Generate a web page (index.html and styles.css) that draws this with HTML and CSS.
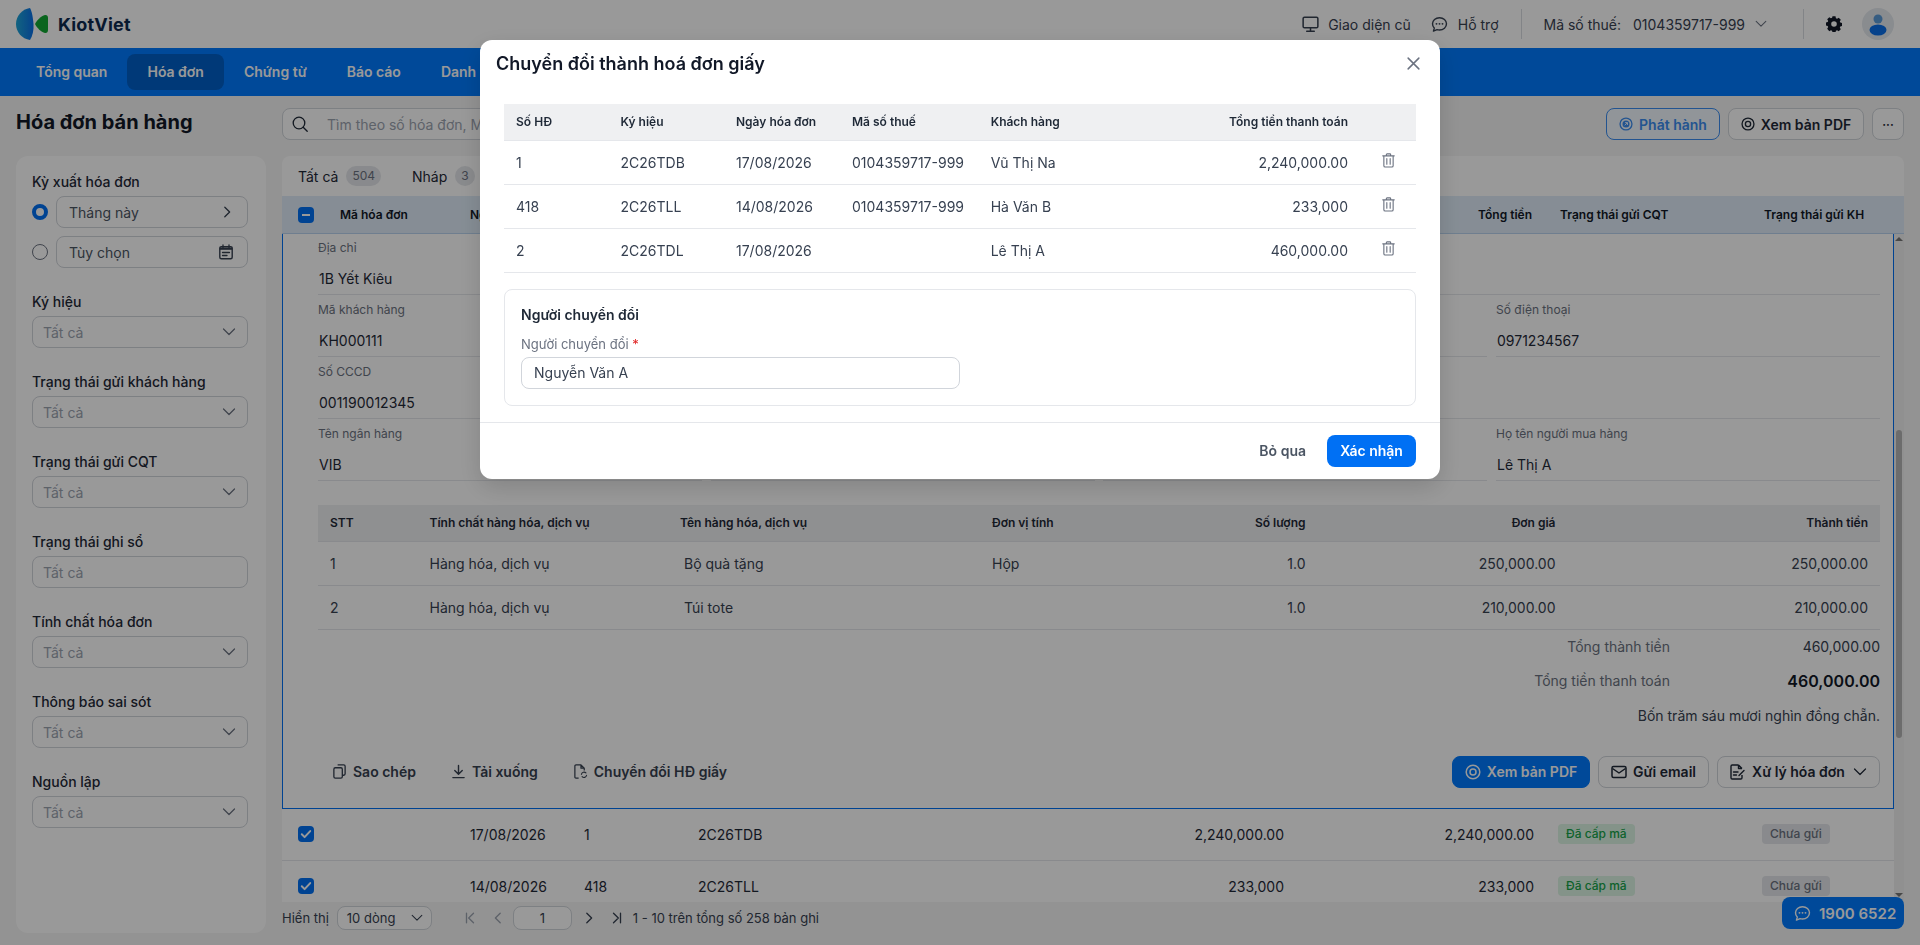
FILE: index.html
```html
<!DOCTYPE html>
<html lang="vi">
<head>
    <meta charset="UTF-8">
    <meta name="viewport" content="width=device-width, initial-scale=1.0">
    <title>Hóa đơn bán hàng</title>
    <link rel="stylesheet" href="styles.css">
</head>
<body>
    <svg class="icon-defs" xmlns="http://www.w3.org/2000/svg">
        <symbol id="i-down" viewBox="0 0 16 16"><path d="M2.500 5l5.500 5.500L13.500 5" fill="none" stroke="currentColor" stroke-width="1.200" stroke-linecap="round" stroke-linejoin="round"/></symbol>
        <symbol id="i-right" viewBox="0 0 16 16"><path d="M5.500 2.500l5.500 5.500-5.500 5.500" fill="none" stroke="currentColor" stroke-width="1.500" stroke-linecap="round" stroke-linejoin="round"/></symbol>
        <symbol id="i-left" viewBox="0 0 16 16"><path d="M10.500 2.500L5 8l5.500 5.500" fill="none" stroke="currentColor" stroke-width="1.500" stroke-linecap="round" stroke-linejoin="round"/></symbol>
        <symbol id="i-first" viewBox="0 0 16 16"><path d="M12 2.500L6.500 8l5.500 5.500M4 2.500v11" fill="none" stroke="currentColor" stroke-width="1.500" stroke-linecap="round" stroke-linejoin="round"/></symbol>
        <symbol id="i-last" viewBox="0 0 16 16"><path d="M4 2.500L9.500 8 4 13.500M12 2.500v11" fill="none" stroke="currentColor" stroke-width="1.500" stroke-linecap="round" stroke-linejoin="round"/></symbol>
        <symbol id="i-monitor" viewBox="0 0 18 18"><rect x="1.200" y="1.200" width="15.600" height="11.300" rx="1.400" fill="none" stroke="currentColor" stroke-width="1.600"/><path d="M9 12.500v3.400M5 16.200h8" fill="none" stroke="currentColor" stroke-width="1.600" stroke-linecap="round"/></symbol>
        <symbol id="i-chat" viewBox="0 0 18 18"><path d="M9 1.800c4.200 0 7.400 2.900 7.400 6.500S13.200 14.800 9 14.800c-.9 0-1.800-.1-2.600-.4L2.600 16l.9-3.200C2.200 11.700 1.600 10.100 1.600 8.300 1.600 4.700 4.800 1.800 9 1.800z" fill="none" stroke="currentColor" stroke-width="1.500" stroke-linejoin="round"/><circle cx="5.800" cy="8.300" r="1" fill="currentColor"/><circle cx="9" cy="8.300" r="1" fill="currentColor"/><circle cx="12.200" cy="8.300" r="1" fill="currentColor"/></symbol>
        <symbol id="i-gear" viewBox="0 0 16 16"><path fill-rule="evenodd" d="M6.500.8h3l.4 1.900 1.200.5 1.600-1 2.100 2.100-1 1.600.5 1.200 1.900.4v3l-1.900.4-.5 1.200 1 1.600-2.100 2.100-1.600-1-1.200.5-.4 1.900h-3l-.4-1.900-1.200-.5-1.600 1L1.200 13.200l1-1.600-.5-1.200L-.2 10V7l1.900-.4.5-1.200-1-1.600L3.300 1.700l1.600 1 1.200-.5zM8 5.700a2.800 2.800 0 100 5.600 2.800 2.800 0 000-5.600z" transform="translate(0 -.5)" fill="currentColor"/></symbol>
        <symbol id="i-search" viewBox="0 0 16 16"><circle cx="7" cy="7" r="5.800" fill="none" stroke="currentColor" stroke-width="1.300"/><path d="M11.200 11.200l4 4" stroke="currentColor" stroke-width="1.300" stroke-linecap="round"/></symbol>
        <symbol id="i-target" viewBox="0 0 16 16"><circle cx="8" cy="8" r="6.800" fill="none" stroke="currentColor" stroke-width="1.500"/><circle cx="8" cy="8" r="3" fill="none" stroke="currentColor" stroke-width="1.500"/></symbol>
        <symbol id="i-issue" viewBox="0 0 16 16"><circle cx="8" cy="8" r="6.800" fill="none" stroke="currentColor" stroke-width="1.500"/><circle cx="8" cy="8" r="4" fill="currentColor"/><path d="M6.600 9.500l3-3M7 6.400h2.700v2.700" fill="none" stroke="#eef5ff" stroke-width="1.100"/></symbol>
        <symbol id="i-calendar" viewBox="0 0 16 16"><rect x="1.800" y="2.600" width="12.400" height="12.200" rx="1.500" fill="none" stroke="currentColor" stroke-width="1.400"/><path d="M1.800 3.400h12.400v2.400H1.800z" fill="currentColor"/><path d="M5 1v2.500M11 1v2.500M4.500 8.500h7M4.500 11.500h4.500" stroke="currentColor" stroke-width="1.300" stroke-linecap="round"/></symbol>
        <symbol id="i-trash" viewBox="0 0 14 16"><path d="M.8 3h12.400M4.700 3V1.600c0-.4.300-.7.700-.7h3.200c.4 0 .7.300.7.700V3M2 3v10.600c0 .8.600 1.400 1.400 1.400h7.200c.8 0 1.400-.6 1.400-1.400V3M5.200 6v6M8.800 6v6" fill="none" stroke="currentColor" stroke-width="1.200" stroke-linecap="round" stroke-linejoin="round"/></symbol>
        <symbol id="i-close" viewBox="0 0 14 14"><path d="M2 2l10 10M12 2L2 12" fill="none" stroke="currentColor" stroke-width="1.400" stroke-linecap="round"/></symbol>
        <symbol id="i-mail" viewBox="0 0 16 16"><rect x="1" y="2.500" width="14" height="11" rx="1.500" fill="none" stroke="currentColor" stroke-width="1.500"/><path d="M1.500 4.500L8 9l6.500-4.500" fill="none" stroke="currentColor" stroke-width="1.500" stroke-linejoin="round"/></symbol>
        <symbol id="i-docedit" viewBox="0 0 16 16"><path d="M9.500 1H3.200C2.500 1 2 1.500 2 2.200v11.600c0 .7.500 1.200 1.200 1.200h8.600c.7 0 1.200-.5 1.200-1.200V11M9.500 1L13 4.500M9.500 1v3.500H13" fill="none" stroke="currentColor" stroke-width="1.400" stroke-linejoin="round"/><path d="M4.500 8h4.500M4.500 11h3M10 11.500l5-5" fill="none" stroke="currentColor" stroke-width="1.400" stroke-linecap="round"/></symbol>
        <symbol id="i-copy" viewBox="0 0 16 16"><path d="M6 1h6.500C13.300 1 14 1.700 14 2.500v8c0 .8-.7 1.500-1.500 1.500H11" fill="none" stroke="currentColor" stroke-width="1.400"/><rect x="2" y="4" width="9" height="11" rx="1.500" fill="none" stroke="currentColor" stroke-width="1.400"/></symbol>
        <symbol id="i-download" viewBox="0 0 16 16"><path d="M8 1.500v9M4 7l4 4 4-4M2 14.500h12" fill="none" stroke="currentColor" stroke-width="1.500" stroke-linecap="round" stroke-linejoin="round"/></symbol>
        <symbol id="i-fileswap" viewBox="0 0 16 16"><path d="M6 15H3.200C2.500 15 2 14.500 2 13.800V2.200C2 1.500 2.500 1 3.200 1h5.300L12 4.500V7M8.500 1v3.500H12" fill="none" stroke="currentColor" stroke-width="1.300" stroke-linejoin="round"/><path d="M9 11a2.800 2.800 0 014.800-1.500M14.500 12a2.800 2.800 0 01-4.800 1.500" fill="none" stroke="currentColor" stroke-width="1.200" stroke-linecap="round"/></symbol>
        <symbol id="i-check" viewBox="0 0 16 16"><path d="M3.800 8.300l2.800 2.800 5.600-6" fill="none" stroke="#fff" stroke-width="2" stroke-linecap="round" stroke-linejoin="round"/></symbol>
    </svg>

    <div class="app">
        <div class="header">
            <div class="logo">
                <svg class="logo-mark" viewBox="0 0 33 32" xmlns="http://www.w3.org/2000/svg">
                    <defs>
                        <linearGradient id="logo-blue" x1="0" y1="0" x2="1" y2="0">
                            <stop offset="0" stop-color="#1fa6d6"/>
                            <stop offset="1" stop-color="#0a6fe8"/>
                        </linearGradient>
                    </defs>
                    <path d="M14 0C6 1 0 8 0 16s6 15 14 16c2.500-4 4-10 3.500-16S16 3.500 14 0z" fill="url(#logo-blue)"/>
                    <path d="M19 16c2-4 6-8 10-9 2-.2 3 1 3 3v12c0 2-1 3.200-3 3-4-1-8-5-10-9z" fill="#12a833"/>
                </svg>
                <span class="logo-text">KiotViet</span>
            </div>
            <div class="header-right">
                <svg class="ic-17"><use href="#i-monitor"/></svg>
                <span class="h-giao">Giao diện cũ</span>
                <svg class="ic-17 h-chat"><use href="#i-chat"/></svg>
                <span class="h-support">Hỗ trợ</span>
                <span class="h-divider"></span>
                <span>Mã số thuế:</span>
                <span class="h-tax">0104359717-999</span>
                <svg class="ic-14 h-caret"><use href="#i-down"/></svg>
                <span class="h-divider h-divider-2"></span>
                <svg class="ic-16 h-gear"><use href="#i-gear"/></svg>
                <span class="avatar">
                    <svg viewBox="0 0 32 32"><circle cx="16" cy="11" r="4.500" fill="#5b9bd9"/><ellipse cx="16" cy="22" rx="8.500" ry="5.500" fill="#0a6fe8"/></svg>
                </span>
            </div>
        </div>

        <div class="nav">
            <a class="nav-item" href="#">Tổng quan</a>
            <a class="nav-item active" href="#">Hóa đơn</a>
            <a class="nav-item" href="#">Chứng từ</a>
            <a class="nav-item" href="#">Báo cáo</a>
            <a class="nav-item" href="#">Danh mục</a>
        </div>

        <div class="page">
            <h1 class="page-title">Hóa đơn bán hàng</h1>
            <div class="toolbar">
                <div class="search">
                    <svg class="ic-16"><use href="#i-search"/></svg>
                    <span>Tìm theo số hóa đơn, Mã</span>
                </div>
                <button class="btn btn-issue"><svg class="ic-14"><use href="#i-issue"/></svg>Phát hành</button>
                <button class="btn btn-pdf"><svg class="ic-14"><use href="#i-target"/></svg>Xem bản PDF</button>
                <button class="btn btn-more">···</button>
            </div>

            <div class="sidebar">
                <div class="filter">
                    <div class="filter-label">Kỳ xuất hóa đơn</div>
                    <div class="radio-row">
                        <span class="radio checked"></span>
                        <div class="select select-dark"><span>Tháng này</span><svg class="ic-14"><use href="#i-right"/></svg></div>
                    </div>
                    <div class="radio-row">
                        <span class="radio"></span>
                        <div class="select select-dark"><span>Tùy chọn</span><svg class="ic-16"><use href="#i-calendar"/></svg></div>
                    </div>
                </div>
                <div class="filter">
                    <div class="filter-label">Ký hiệu</div>
                    <div class="select"><span>Tất cả</span><svg class="ic-16"><use href="#i-down"/></svg></div>
                </div>
                <div class="filter">
                    <div class="filter-label">Trạng thái gửi khách hàng</div>
                    <div class="select"><span>Tất cả</span><svg class="ic-16"><use href="#i-down"/></svg></div>
                </div>
                <div class="filter">
                    <div class="filter-label">Trạng thái gửi CQT</div>
                    <div class="select"><span>Tất cả</span><svg class="ic-16"><use href="#i-down"/></svg></div>
                </div>
                <div class="filter">
                    <div class="filter-label">Trạng thái ghi sổ</div>
                    <div class="select"><span>Tất cả</span></div>
                </div>
                <div class="filter">
                    <div class="filter-label">Tính chất hóa đơn</div>
                    <div class="select"><span>Tất cả</span><svg class="ic-16"><use href="#i-down"/></svg></div>
                </div>
                <div class="filter">
                    <div class="filter-label">Thông báo sai sót</div>
                    <div class="select"><span>Tất cả</span><svg class="ic-16"><use href="#i-down"/></svg></div>
                </div>
                <div class="filter">
                    <div class="filter-label">Nguồn lập</div>
                    <div class="select"><span>Tất cả</span><svg class="ic-16"><use href="#i-down"/></svg></div>
                </div>
            </div>

            <div class="main">
                <div class="panel">
                    <div class="tabs">
                        <div class="tab">Tất cả <span class="count">504</span></div>
                        <div class="tab">Nháp <span class="count">3</span></div>
                    </div>
                    <div class="list-head list-grid">
                        <div><span class="checkbox"><i class="minus"></i></span></div>
                        <div>Mã hóa đơn</div>
                        <div>Ngày</div>
                        <div></div>
                        <div></div>
                        <div></div>
                        <div class="right head-total">Tổng tiền</div>
                        <div class="status head-status">Trạng thái gửi CQT</div>
                        <div class="head-status-kh">Trạng thái gửi KH</div>
                    </div>
                    <div class="list-wrap">
                        <div class="list">
                            <div class="detail">
                                <div class="fields">
                                    <div class="field span-4"><label>Địa chỉ</label><div class="value">1B Yết Kiêu</div></div>
                                    <div class="field"><label>Mã khách hàng</label><div class="value">KH000111</div></div>
                                    <div class="field"></div>
                                    <div class="field"></div>
                                    <div class="field"><label>Số điện thoại</label><div class="value">0971234567</div></div>
                                    <div class="field"><label>Số CCCD</label><div class="value">001190012345</div></div>
                                    <div class="field span-3"></div>
                                    <div class="field"><label>Tên ngân hàng</label><div class="value">VIB</div></div>
                                    <div class="field"></div>
                                    <div class="field"></div>
                                    <div class="field"><label>Họ tên người mua hàng</label><div class="value">Lê Thị A</div></div>
                                </div>

                                <table class="data-table items">
                                    <colgroup>
                                        <col class="c-stt"><col class="c-kind"><col class="c-name"><col class="c-unit"><col class="c-qty"><col class="c-price"><col>
                                    </colgroup>
                                    <thead>
                                        <tr>
                                            <th>STT</th>
                                            <th>Tính chất hàng hóa, dịch vụ</th>
                                            <th>Tên hàng hóa, dịch vụ</th>
                                            <th>Đơn vị tính</th>
                                            <th class="right">Số lượng</th>
                                            <th class="right">Đơn giá</th>
                                            <th class="right">Thành tiền</th>
                                        </tr>
                                    </thead>
                                    <tbody>
                                        <tr>
                                            <td>1</td>
                                            <td>Hàng hóa, dịch vụ</td>
                                            <td class="indent">Bộ quà tặng</td>
                                            <td>Hộp</td>
                                            <td class="right">1.0</td>
                                            <td class="right">250,000.00</td>
                                            <td class="right">250,000.00</td>
                                        </tr>
                                        <tr>
                                            <td>2</td>
                                            <td>Hàng hóa, dịch vụ</td>
                                            <td class="indent">Túi tote</td>
                                            <td></td>
                                            <td class="right">1.0</td>
                                            <td class="right">210,000.00</td>
                                            <td class="right">210,000.00</td>
                                        </tr>
                                    </tbody>
                                </table>

                                <div class="totals">
                                    <div class="total-row"><span class="total-label">Tổng thành tiền</span><span class="total-value">460,000.00</span></div>
                                    <div class="total-row total-row-big"><span class="total-label">Tổng tiền thanh toán</span><span class="total-value">460,000.00</span></div>
                                    <div class="total-words">Bốn trăm sáu mươi nghìn đồng chẵn.</div>
                                </div>

                                <div class="actions">
                                    <div class="actions-left">
                                        <a class="link-action" href="#"><svg class="ic-15"><use href="#i-copy"/></svg>Sao chép</a>
                                        <a class="link-action" href="#"><svg class="ic-15"><use href="#i-download"/></svg>Tải xuống</a>
                                        <a class="link-action" href="#"><svg class="ic-15"><use href="#i-fileswap"/></svg>Chuyển đổi HĐ giấy</a>
                                    </div>
                                    <div class="actions-right">
                                        <button class="btn btn-primary btn-view"><svg class="ic-16"><use href="#i-target"/></svg>Xem bản PDF</button>
                                        <button class="btn btn-mail"><svg class="ic-16"><use href="#i-mail"/></svg>Gửi email</button>
                                        <button class="btn btn-process"><svg class="ic-16"><use href="#i-docedit"/></svg>Xử lý hóa đơn<svg class="ic-16"><use href="#i-down"/></svg></button>
                                    </div>
                                </div>
                            </div>

                            <div class="list-row list-grid">
                                <div><span class="checkbox"><svg><use href="#i-check"/></svg></span></div>
                                <div></div>
                                <div>17/08/2026</div>
                                <div>1</div>
                                <div>2C26TDB</div>
                                <div class="right">2,240,000.00</div>
                                <div class="right">2,240,000.00</div>
                                <div class="status"><span class="badge badge-green">Đã cấp mã</span></div>
                                <div><span class="badge badge-gray">Chưa gửi</span></div>
                            </div>
                            <div class="list-row list-grid">
                                <div><span class="checkbox"><svg><use href="#i-check"/></svg></span></div>
                                <div></div>
                                <div>14/08/2026</div>
                                <div>418</div>
                                <div>2C26TLL</div>
                                <div class="right">233,000</div>
                                <div class="right">233,000</div>
                                <div class="status"><span class="badge badge-green">Đã cấp mã</span></div>
                                <div><span class="badge badge-gray">Chưa gửi</span></div>
                            </div>
                        </div>
                        <div class="scrollbar">
                            <span class="arrow-up"></span>
                            <span class="thumb"></span>
                            <span class="arrow-down"></span>
                        </div>
                    </div>
                </div>

                <div class="pager">
                    <span>Hiển thị</span>
                    <div class="page-size"><span>10 dòng</span><svg class="ic-14"><use href="#i-down"/></svg></div>
                    <svg class="ic-14 pager-first muted"><use href="#i-first"/></svg>
                    <svg class="ic-14 pager-prev muted"><use href="#i-left"/></svg>
                    <div class="page-input">1</div>
                    <svg class="ic-14 pager-next"><use href="#i-right"/></svg>
                    <svg class="ic-14 pager-last"><use href="#i-last"/></svg>
                    <span class="pager-info">1 - 10 trên tổng số 258 bản ghi</span>
                </div>
            </div>
        </div>

        <div class="hotline"><svg class="ic-17"><use href="#i-chat"/></svg><span>1900 6522</span></div>
    </div>

    <!-- dialog over the dimmed page -->
    <div class="overlay">
        <div class="modal">
            <div class="modal-head">
                <h2>Chuyển đổi thành hoá đơn giấy</h2>
                <svg class="ic-15 modal-close"><use href="#i-close"/></svg>
            </div>
            <div class="modal-body">
                <table class="data-table convert">
                    <colgroup>
                        <col class="m-1"><col class="m-2"><col class="m-3"><col class="m-4"><col><col class="m-6"><col class="m-7">
                    </colgroup>
                    <thead>
                        <tr>
                            <th>Số HĐ</th>
                            <th>Ký hiệu</th>
                            <th>Ngày hóa đơn</th>
                            <th>Mã số thuế</th>
                            <th>Khách hàng</th>
                            <th class="right">Tổng tiền thanh toán</th>
                            <th></th>
                        </tr>
                    </thead>
                    <tbody>
                        <tr>
                            <td>1</td><td>2C26TDB</td><td>17/08/2026</td><td>0104359717-999</td><td>Vũ Thị Na</td>
                            <td class="right">2,240,000.00</td>
                            <td class="trash"><svg class="ic-trash"><use href="#i-trash"/></svg></td>
                        </tr>
                        <tr>
                            <td>418</td><td>2C26TLL</td><td>14/08/2026</td><td>0104359717-999</td><td>Hà Văn B</td>
                            <td class="right">233,000</td>
                            <td class="trash"><svg class="ic-trash"><use href="#i-trash"/></svg></td>
                        </tr>
                        <tr>
                            <td>2</td><td>2C26TDL</td><td>17/08/2026</td><td></td><td>Lê Thị A</td>
                            <td class="right">460,000.00</td>
                            <td class="trash"><svg class="ic-trash"><use href="#i-trash"/></svg></td>
                        </tr>
                    </tbody>
                </table>

                <div class="converter-box">
                    <div class="converter-title">Người chuyển đổi</div>
                    <label class="converter-label">Người chuyển đổi <span class="required">*</span></label>
                    <div class="converter-input">Nguyễn Văn A</div>
                </div>
            </div>
            <div class="modal-foot">
                <button class="btn-skip">Bỏ qua</button>
                <button class="btn-confirm">Xác nhận</button>
            </div>
        </div>
    </div>
</body>
</html>
```

FILE: styles.css
```css
* {
    box-sizing: border-box;
}
html, body {
    margin: 0;
    height: 945px;
    overflow: hidden;
}
body {
    font-family: Inter, "Noto Sans", sans-serif;
    font-size: 14px;
    color: #1f2937;
    background-color: #f5f5f5;
}
a {
    color: inherit;
    text-decoration: none;
}
button {
    font-family: inherit;
}
svg {
    display: block;
    flex: none;
}
.icon-defs {
    display: none;
}
.ic-14 { width: 14px; height: 14px; }
.ic-15 { width: 15px; height: 15px; }
.ic-16 { width: 16px; height: 16px; }
.ic-17 { width: 17px; height: 17px; }
.right { text-align: right; }

/* header */
.header {
    display: flex;
    align-items: center;
    height: 48px;
    padding: 0 26px 0 16px;
    background-color: #fff;
}
.logo {
    display: flex;
    align-items: center;
}
.logo-mark {
    width: 33px;
    height: 32px;
}
.logo-text {
    margin-left: 9px;
    font-size: 18px;
    font-weight: 700;
    letter-spacing: 0.2px;
    color: #0e2a4f;
}
.header-right {
    display: flex;
    align-items: center;
    margin-left: auto;
    color: #374151;
}
.h-giao { margin-left: 9px; }
.h-chat { margin-left: 20px; }
.h-support { margin-left: 10px; }
.h-divider {
    width: 1px;
    height: 30px;
    margin: 0 22px;
    background-color: #d9dce1;
}
.h-tax { margin-left: 12px; }
.h-caret { margin-left: 9px; color: #6b7280; }
.h-divider-2 { margin: 0 22px 0 35px; }
.h-gear { color: #111827; }
.avatar {
    width: 32px;
    height: 32px;
    margin-left: 20px;
    border-radius: 50%;
    background-color: #e5e9ef;
}

/* nav */
.nav {
    display: flex;
    align-items: center;
    height: 48px;
    padding-left: 16px;
    background-color: #007bff;
}
.nav-item {
    height: 36px;
    padding: 0 20px;
    line-height: 36px;
    font-weight: 600;
    color: #fff;
    border-radius: 8px;
}
.nav-item.active {
    background-color: #0060c9;
}

/* page grid */
.page {
    display: grid;
    grid-template-columns: 250px 1622px;
    grid-template-rows: 32px 777px;
    column-gap: 16px;
    row-gap: 16px;
    padding: 12px 16px 0;
}
.page-title {
    margin: 0;
    font-size: 20px;
    line-height: 28px;
    font-weight: 700;
    color: #111827;
}
.toolbar {
    display: flex;
    align-items: center;
    gap: 8px;
}
.search {
    display: flex;
    align-items: center;
    width: 1000px;
    height: 32px;
    margin-right: auto;
    padding: 0 10px 0 9px;
    color: #9ca3af;
    white-space: nowrap;
    background-color: #fff;
    border: 1px solid #d1d5db;
    border-radius: 8px;
}
.search svg {
    color: #1f2937;
    margin-right: 19px;
}
.btn {
    display: inline-flex;
    align-items: center;
    justify-content: center;
    gap: 6px;
    height: 32px;
    padding: 0;
    font-size: 14px;
    font-weight: 600;
    color: #1f2937;
    background-color: #fff;
    border: 1px solid #d1d5db;
    border-radius: 8px;
}
.btn-issue {
    width: 114px;
    color: #3b8df0;
    background-color: #f2f8ff;
    border-color: #3b8df0;
}
.btn-pdf { width: 136px; }
.btn-more { width: 32px; font-size: 12px; }
.btn-primary {
    color: #fff;
    background-color: #007bff;
    border-color: #007bff;
}
.btn-view { width: 138px; gap: 6px; }
.btn-mail { width: 111px; gap: 6px; }
.btn-process { width: 163px; gap: 7px; }

/* sidebar */
.sidebar {
    padding: 16px 18px 0 16px;
    background-color: #fff;
    border-radius: 12px;
}
.filter {
    margin-bottom: 24px;
}
.filter-label {
    height: 20px;
    margin-bottom: 4px;
    line-height: 20px;
    font-weight: 500;
    color: #1f2937;
}
.radio-row {
    display: flex;
    align-items: center;
    gap: 8px;
    margin-bottom: 8px;
}
.radio-row:last-child {
    margin-bottom: 0;
}
.radio {
    flex: none;
    width: 16px;
    height: 16px;
    background-color: #fff;
    border: 1px solid #6b7280;
    border-radius: 50%;
}
.radio.checked {
    border: 4px solid #0070f4;
}
.select {
    display: flex;
    align-items: center;
    justify-content: space-between;
    flex: 1;
    height: 32px;
    padding: 0 10px;
    color: #9ca3af;
    background-color: #fff;
    border: 1px solid #d1d5db;
    border-radius: 8px;
}
.select svg {
    color: #6b7280;
}
.select-dark {
    padding: 0 13px 0 12px;
    color: #4b5563;
}
.select-dark svg {
    color: #374151;
}

/* main panel */
.main {
    min-width: 0;
}
.panel {
    height: 746px;
    overflow: hidden;
    background-color: #fff;
    border-radius: 8px 8px 0 0;
}
.tabs {
    display: flex;
    gap: 31px;
    height: 40px;
    padding-left: 16px;
    align-items: center;
}
.tab {
    display: flex;
    align-items: center;
    gap: 8px;
    color: #1f2937;
}
.count {
    height: 20px;
    padding: 0 6px;
    line-height: 20px;
    font-size: 12px;
    color: #6b7280;
    background-color: #e5e7eb;
    border-radius: 10px;
}
.list-grid {
    display: grid;
    grid-template-columns: 58px 130px 114px 114px 352px 234px 250px 228px 132px;
    align-items: center;
}
.list-head {
    height: 38px;
    font-size: 12px;
    font-weight: 600;
    color: #111827;
    white-space: nowrap;
    background-color: #dfecf8;
    border-bottom: 1px solid #b9d3ee;
}
.list-head > div:first-child,
.list-row > div:first-child {
    padding-left: 16px;
}
.status { padding-left: 24px; }
.head-total { padding-right: 2px; }
.head-status { padding-left: 26px; }
.head-status-kh { padding-left: 2px; }
.checkbox {
    display: block;
    position: relative;
    width: 16px;
    height: 16px;
    background-color: #0070f4;
    border-radius: 4px;
}
.checkbox svg {
    width: 16px;
    height: 16px;
}
.minus {
    display: block;
    position: absolute;
    left: 4px;
    top: 7px;
    width: 8px;
    height: 2px;
    background-color: #fff;
}
.list-wrap {
    display: flex;
}
.list {
    width: 1612px;
}
.scrollbar {
    display: flex;
    flex-direction: column;
    align-items: center;
    width: 10px;
    height: 668px;
    padding-top: 3px;
    background-color: #f1f1f1;
}
.arrow-up,
.arrow-down {
    width: 0;
    height: 0;
    border-left: 4px solid transparent;
    border-right: 4px solid transparent;
}
.arrow-up { border-bottom: 4px solid #777; }
.arrow-down { margin-top: 155px; border-top: 4px solid #777; }
.thumb {
    width: 6px;
    height: 308px;
    margin-top: 189px;
    background-color: #b5b5b5;
    border-radius: 3px;
}

/* expanded invoice */
.detail {
    padding: 0 13px 20px 35px;
    background-color: #fff;
    border: 1px solid #0070f4;
    border-top: none;
}
.fields {
    display: grid;
    grid-template-columns: repeat(4, 1fr);
    gap: 1px 8.67px;
}
.field {
    height: 61px;
    padding-top: 6px;
    border-bottom: 1px solid #e5e7eb;
}
.span-4 { grid-column: span 4; }
.span-3 { grid-column: span 3; }
.field label {
    display: block;
    height: 16px;
    line-height: 16px;
    font-size: 12px;
    color: #6b7280;
}
.field .value {
    margin-top: 13px;
    padding-left: 1px;
    line-height: 20px;
    color: #1f2937;
}

/* tables */
.data-table {
    width: 100%;
    table-layout: fixed;
    border-collapse: collapse;
}
.data-table th {
    height: 36px;
    padding: 0 12px;
    font-size: 12px;
    font-weight: 600;
    text-align: left;
    color: #1f2937;
    background-color: #eff0f2;
    border-bottom: 1px solid #e5e7eb;
}
.data-table th.right { text-align: right; }
.data-table td {
    height: 44px;
    padding: 0 12px;
    color: #374151;
    white-space: nowrap;
    border-bottom: 1px solid #e5e7eb;
}
.data-table td.right { text-align: right; }
.items {
    margin-top: 24px;
}
.c-stt { width: 99.5px; }
.c-kind { width: 250.5px; }
.c-name { width: 312px; }
.c-unit { width: 180px; }
.c-qty { width: 157.5px; }
.c-price { width: 250px; }
.data-table td.indent { padding-left: 16px; }

.totals {
    padding-top: 7px;
}
.total-row {
    display: flex;
    justify-content: flex-end;
    align-items: center;
    height: 20px;
}
.total-label {
    color: #6b7280;
}
.total-value {
    width: 210px;
    text-align: right;
    color: #374151;
}
.total-row-big {
    height: 24px;
    margin-top: 12px;
}
.total-row-big .total-value {
    font-size: 16px;
    font-weight: 600;
    color: #111827;
}
.total-words {
    height: 20px;
    margin-top: 13px;
    line-height: 20px;
    text-align: right;
    color: #374151;
}
.actions {
    display: flex;
    justify-content: space-between;
    align-items: center;
    margin-top: 30px;
}
.actions-left {
    display: flex;
    gap: 35px;
    padding-left: 14px;
}
.link-action {
    display: flex;
    align-items: center;
    gap: 6px;
    font-weight: 600;
    color: #374151;
}
.actions-right {
    display: flex;
    gap: 8px;
}
.list-row {
    height: 52px;
    color: #1f2937;
    background-color: #fff;
    border-bottom: 1px solid #e5e7eb;
}
.badge {
    display: inline-block;
    height: 20px;
    padding: 0 8px;
    line-height: 20px;
    font-size: 12px;
    font-weight: 500;
    border-radius: 4px;
}
.badge-green {
    color: #16a34a;
    background-color: #dcf5e4;
}
.badge-gray {
    color: #6b7280;
    background-color: #e5e7eb;
}

/* pagination */
.pager {
    display: flex;
    align-items: center;
    height: 38px;
    padding-bottom: 7px;
    font-size: 13px;
    color: #374151;
}
.page-size {
    display: flex;
    align-items: center;
    justify-content: space-between;
    width: 95px;
    height: 24px;
    margin-left: 8px;
    padding: 0 7px 0 9px;
    background-color: #fff;
    border: 1px solid #d1d5db;
    border-radius: 8px;
}
.muted { color: #9ca3af; }
.pager-first { margin-left: 31px; }
.pager-prev { margin-left: 14px; }
.pager-next { margin-left: 10px; }
.pager-last { margin-left: 14px; }
.page-input {
    width: 59px;
    height: 24px;
    margin-left: 8px;
    line-height: 22px;
    text-align: center;
    background-color: #fff;
    border: 1px solid #d1d5db;
    border-radius: 8px;
}
.pager-info { margin-left: 9px; }

.hotline {
    position: absolute;
    left: 1782px;
    top: 897px;
    display: flex;
    align-items: center;
    gap: 8px;
    width: 122px;
    height: 32px;
    padding-left: 12px;
    font-size: 15px;
    font-weight: 600;
    white-space: nowrap;
    color: #fff;
    background-color: #007bff;
    border-radius: 8px;
}

/* dialog */
.overlay {
    position: fixed;
    inset: 0;
    display: flex;
    justify-content: center;
    align-items: flex-start;
    padding-top: 40px;
    background-color: rgba(0, 0, 0, 0.4);
}
.modal {
    width: 960px;
    background-color: #fff;
    border-radius: 12px;
    box-shadow: 0 8px 24px rgba(0, 0, 0, 0.15);
}
.modal-head {
    display: flex;
    justify-content: space-between;
    align-items: center;
    height: 64px;
    padding: 0 19px 18px 16px;
}
.modal-head h2 {
    margin: 0;
    font-size: 18px;
    font-weight: 600;
    color: #111827;
}
.modal-close {
    color: #6b7280;
}
.modal-body {
    padding: 0 24px 16px;
}
.m-1 { width: 104.5px; }
.m-2 { width: 115.5px; }
.m-3 { width: 116px; }
.m-4 { width: 138.7px; }
.m-6 { width: 200px; }
.m-7 { width: 56px; }
.convert .trash {
    padding: 0 0 3px 22px;
    color: #6b7280;
}
.ic-trash {
    width: 13px;
    height: 15px;
}
.converter-box {
    height: 117px;
    margin-top: 16px;
    padding: 15px 16px 0;
    border: 1px solid #e5e7eb;
    border-radius: 8px;
}
.converter-title {
    line-height: 20px;
    font-weight: 600;
    color: #1f2937;
}
.converter-label {
    display: block;
    margin-top: 11px;
    line-height: 16px;
    font-size: 13px;
    color: #6b7280;
}
.required {
    color: #e02424;
}
.converter-input {
    width: 439px;
    height: 32px;
    margin-top: 5px;
    padding: 0 12px;
    line-height: 30px;
    color: #374151;
    border: 1px solid #d1d5db;
    border-radius: 8px;
}
.modal-foot {
    display: flex;
    justify-content: flex-end;
    align-items: center;
    gap: 21px;
    height: 57px;
    padding: 0 24px;
    border-top: 1px solid #e5e7eb;
}
.btn-skip {
    padding: 0;
    font-size: 14px;
    font-weight: 600;
    color: #4b5563;
    background: none;
    border: none;
}
.btn-confirm {
    width: 89px;
    height: 32px;
    font-size: 14px;
    font-weight: 600;
    color: #fff;
    background-color: #0070f4;
    border: none;
    border-radius: 8px;
}
```
